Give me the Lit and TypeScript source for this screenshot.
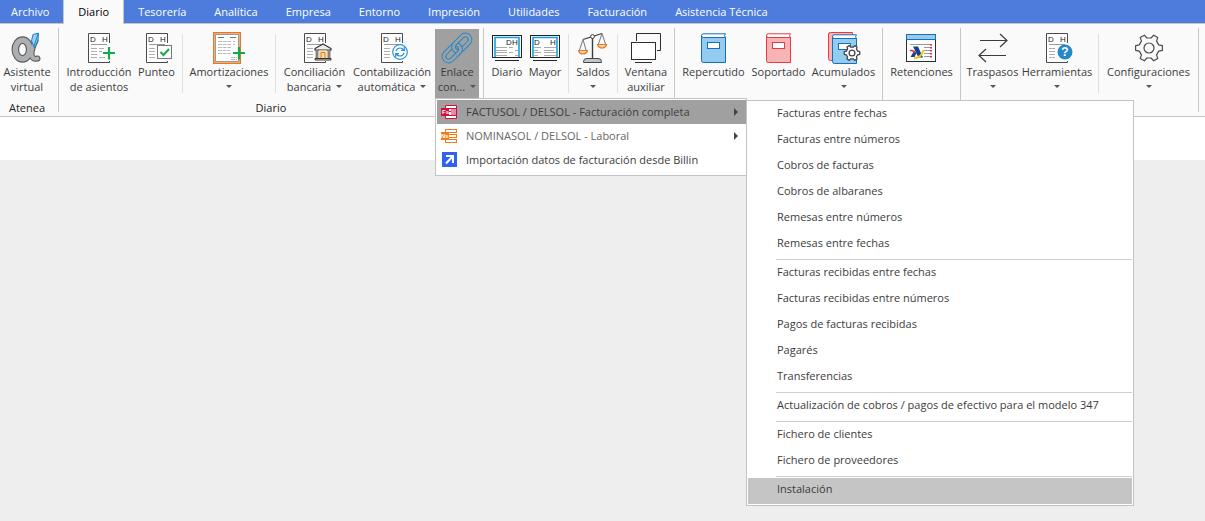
import { LitElement, html, css, svg, nothing, TemplateResult } from "lit";
import { customElement, property } from "lit/decorators.js";
import { classMap } from "lit/directives/class-map.js";
import { styleMap } from "lit/directives/style-map.js";

/* ---------- Icons, drawn on a 32 x 32 grid ---------- */

const PAGE = svg`
  <rect x="5" y="1" width="22" height="30" fill="#fff"/>
  <path d="M26.500 11V1.500H5.500V30.500H26.500V29" fill="none" stroke="#4a4a4a"/>
  <text x="7" y="10" class="glyph">D</text>
  <text x="19" y="10" class="glyph">H</text>
  <path d="M8 12.500H24" stroke="#9a9a9a"/>
  <path d="M8 16.500H14M8 19.500H14M8 22.500H14M8 25.500H14" stroke="#b0b0b0"/>`;

/* Six-toothed cog centred on the origin. */
const point = (radius: number, degrees: number) => {
  const a = (degrees * Math.PI) / 180;
  return `${(radius * Math.cos(a)).toFixed(2)} ${(radius * Math.sin(a)).toFixed(2)}`;
};
const COG = [0, 60, 120, 180, 240, 300]
  .map((d) => `${point(10.2, d - 18)}L${point(13.6, d - 10)}L${point(13.6, d + 10)}L${point(10.2, d + 18)}`)
  .join("L");
const GEAR = svg`<path d="M${COG}Z" stroke-linejoin="round"/><circle r="5"/>`;

const book = (line: string, fill: string) => svg`
  <path d="M.5 3V27.500Q.5 29.500 2.500 29.500H24.500V4.500H3Q.5 4.500 .5 2.500Z" fill="${fill}" stroke="${line}"/>
  <path d="M24.500 .8H2.500Q.5 .8 .5 2.600Q.5 4.500 2.500 4.500H24.500Q22.500 2.600 24.500 .8Z" fill="#fff" stroke="${line}"/>
  <rect x="6.500" y="9.500" width="12" height="6" fill="#fff" stroke="${line}"/>`;

const screen = (ledger: boolean) => svg`
  <rect x="1.500" y="3.500" width="29" height="22" fill="#fff" stroke="#222"/>
  <path d="M4 25V5.500H28V25" fill="none" stroke="#16a1dd" stroke-width="1.600"/>
  <path d="M4 28.500H28" stroke="#222"/>
  <text x="${ledger ? 5 : 15}" y="13" class="glyph">D</text>
  <text x="21" y="13" class="glyph">H</text>
  ${ledger
    ? svg`<path d="M5 15.500H12M5 18.500H9M5 20.500H12M5 23.500H9M15 15.500H27M15 18.500H25M15 20.500H27M15 23.500H27" stroke="#aaa"/>`
    : svg`<path d="M5 15.500H16M5 18.500H16M5 20.500H16M5 23.500H16M18 15.500H22M18 20.500H22M24 18.500H27M24 23.500H27" stroke="#aaa"/>`}`;

const CHAIN_A = svg`<rect x="-16.500" y="-4.600" width="19.500" height="9.200" rx="4.600"/>`;
const CHAIN_B = svg`<rect x="-3" y="-4.600" width="19.500" height="9.200" rx="4.600"/>`;
const CHAIN_OVER = svg`<path d="M-5 4.600H-1.600A4.600 4.600 0 0 0 2.800 1"/>`;
const tube = (shape: TemplateResult) => svg`
  <g stroke="#2386cb" stroke-width="4.800">${shape}</g>
  <g stroke="#a0a0a0" stroke-width="2.800">${shape}</g>`;

const ICONS: Record<string, TemplateResult> = {
  alpha: svg`
    <g fill="none" stroke-linecap="round">
      <path d="M24.500 9Q20.500 17 20.500 22Q21 28 26.500 26.500" stroke="#595b5d" stroke-width="6"/>
      <ellipse cx="11.500" cy="17.500" rx="7.200" ry="9.400" stroke="#595b5d" stroke-width="7.600"/>
      <ellipse cx="11.500" cy="17.500" rx="7.200" ry="9.400" stroke="#adafb1" stroke-width="5.400"/>
      <path d="M24.500 9Q20.500 17 20.500 22Q21 28 26.500 26.500" stroke="#adafb1" stroke-width="3.800"/>
    </g>
    <path d="M20.500 9L22 2.500L27.500 1.200L27 8L23.500 16Z" fill="#9fd0f2" stroke="#1583cb"/>
    <path d="M27 2L23 14" stroke="#1583cb"/>`,
  entry: svg`${PAGE}
    <path d="M16 16.500H21M16 19.500H19M16 25.500H22" stroke="#b0b0b0"/>
    <path d="M26 15V27.500M20 21H32" stroke="#17a84b" stroke-width="2.200"/>`,
  check: svg`${PAGE}
    <rect x="16.500" y="13.500" width="14" height="13" fill="#fff" stroke="#777"/>
    <path d="M19.500 20L22.500 23L28 17" fill="none" stroke="#17a84b" stroke-width="2"/>`,
  amort: svg`
    <rect x=".7" y=".7" width="26.600" height="30.600" fill="#ffd79a" stroke="#e5772d" stroke-width="1.400"/>
    <rect x="2.500" y="2.500" width="23" height="27" fill="#fff" stroke="#999"/>
    <path d="M5 5.500H11M17 5.500H23" stroke="#777"/>
    <path d="M5 9.500H18M20 9.500H22M5 12.500H18M20 12.500H22M5 15.500H18M5 18.500H17M5 21.500H18M18 25.500H24M18 27.500H24" stroke="#bbb" stroke-dasharray="4 .7"/>
    <path d="M26 15V27.500M20 21H32" stroke="#17a84b" stroke-width="2.200"/>`,
  bank: svg`${PAGE}
    <path d="M16 16.500L24 12L32 16.500V18H16Z" fill="#eee" stroke="#333" stroke-width="1.200"/>
    <path d="M18 18V26M30 18V26" stroke="#333" stroke-width="2.600"/>
    <path d="M18 18V26M30 18V26" stroke="#fff" stroke-width=".8"/>
    <rect x="20" y="18.500" width="8" height="8" fill="#ffdca0"/>
    <path d="M22 26V20.500H26V26" fill="#ffdca0" stroke="#e5772d"/>
    <path d="M16 26.500H32V28H16Z" fill="#ddd" stroke="#333"/>`,
  sync: svg`${PAGE}
    <circle cx="24" cy="20" r="7.300" fill="#fff" stroke="#2c93d2" stroke-width="1.200"/>
    <path d="M20 19Q21 16 24 16Q26 16 28 18M28.300 15V18.300H25M28 21Q27 24 24 24Q22 24 20 22M19.700 25V21.700H23" fill="none" stroke="#2c93d2" stroke-width="1.200"/>`,
  link: svg`
    <g transform="translate(16 16) rotate(-45)" fill="none">
      ${tube(CHAIN_A)}${tube(CHAIN_B)}${tube(CHAIN_OVER)}
    </g>`,
  journal: screen(false),
  ledger: screen(true),
  scales: svg`
    <g fill="none" stroke="#3c3c3c">
      <path d="M15.500 6V26" stroke-width="1.400"/>
      <path d="M6 7.500L25 1.500" stroke-width="1.300"/>
      <path d="M6 7.500L2.500 18M6 7.500L9 18M25 1.500L21.500 12M25 1.500L28.500 12" stroke="#777"/>
      <circle cx="15.500" cy="4.500" r="1.900" fill="#fff"/>
    </g>
    <path d="M1.500 18.500H10.500Q9.500 22 6 22Q2.500 22 1.500 18.500Z" fill="#ffdc9a" stroke="#e8762c" stroke-width="1.200"/>
    <path d="M20.500 12.500H29.500Q28.500 16 25 16Q21.500 16 20.500 12.500Z" fill="#ffdc9a" stroke="#e8762c" stroke-width="1.200"/>
    <path d="M6.500 30.500V29.500Q6.500 26.500 10 26.500H21Q24.500 26.500 24.500 29.500V30.500Z" fill="#c2c6c8" stroke="#444"/>`,
  windows: svg`
    <path d="M6.500 9V1.500H30.500V18.500H27" fill="none" stroke="#2d2d2d"/>
    <rect x="1.500" y="10.500" width="24" height="17" fill="#fff" stroke="#2d2d2d"/>
    <path d="M5 30.500H22" stroke="#2d2d2d"/>`,
  blueBook: svg`<g transform="translate(3 1)">${book("#176fb5", "#93cbf1")}</g>`,
  redBook: svg`<g transform="translate(3 1)">${book("#e63946", "#f5b5b7")}</g>`,
  books: svg`
    <path d="M4 28.500H2.500Q.5 28.500 .5 26.500V2Q.5 .5 2.500 .5H24.500V3" fill="#f5b5b7" stroke="#e63946"/>
    <g transform="translate(4 2)">${book("#176fb5", "#93cbf1")}</g>
    <g transform="translate(24 21) scale(.58)" fill="#fff" stroke="#444" stroke-width="2.200">${GEAR}</g>`,
  tax: svg`
    <rect x=".5" y="2.500" width="29" height="27" fill="#fff" stroke="#2d2d2d"/>
    <rect x=".5" y="2.500" width="29" height="5" fill="#93cbf1" stroke="#176fb5"/>
    <path d="M4 12.500H24M18 15.500H24M18 18.500H24M18 21.500H24M18 24.500H24" stroke="#9a9a9a"/>
    <path d="M25 12V26" stroke="#d9304c" stroke-width="2" stroke-dasharray="1.500 1.500"/>
    <path d="M7 14.500H12L17 25.500H12.500Z" fill="#12418f"/>
    <path d="M4.500 25L7.500 20H11L8.500 25Z" fill="#12418f"/>
    <path d="M4 18.500Q8 18 9.500 21" stroke="#d9304c" stroke-width="1.600" fill="none"/>
    <path d="M8 26Q15 26.500 17.500 18" stroke="#f2c51d" stroke-width="2" fill="none"/>`,
  transfer: svg`<path d="M3 8.500H30M23 2L30 8.500L23 15M29 23.500H2M9 17L2 23.500L9 30" fill="none" stroke="#3c3c3c" stroke-width="1.200"/>`,
  help: svg`${PAGE}
    <circle cx="24" cy="20" r="7.500" fill="#2389cb"/>
    <text x="24" y="24" text-anchor="middle" font-family="Liberation Sans, sans-serif" font-weight="700" font-size="12" fill="#fff">?</text>`,
  gear: svg`<g transform="translate(16 16)" fill="none" stroke="#4a4a4a" stroke-width="1.200">${GEAR}</g>`,
  factusol: svg`
    <path d="M4.500 1.500H15.500V14.500H4.500Z" fill="#fff" stroke="#d0103f"/>
    <rect x="10" y="5" width="5" height="6" fill="#ea8aa2"/>
    <path d="M8 4.500H15M8 7.500H10M8 11.500H15" stroke="#d0103f"/>
    <rect x="0" y="4" width="8" height="8" fill="#d0103f"/>
    <text x="1" y="10" font-family="Liberation Sans, sans-serif" font-size="6" font-weight="700" fill="#fff">Fs</text>`,
  nominasol: svg`
    <rect x="4.500" y="1.500" width="11" height="3" fill="#fff" stroke="#f07d1a"/>
    <rect x="7.500" y="6.500" width="8" height="3" fill="#fff" stroke="#f07d1a"/>
    <rect x="4.500" y="11.500" width="11" height="3" fill="#fff" stroke="#f07d1a"/>
    <rect x="0" y="4" width="8" height="8" fill="#f07d1a"/>
    <text x="0" y="10" font-family="Liberation Sans, sans-serif" font-size="6" font-weight="700" fill="#fff">Ns</text>`,
  billin: svg`
    <rect x="1" y="0" width="15" height="15" fill="#2f62f0"/>
    <path d="M5 4H12V11M12 4L5 11.500" fill="none" stroke="#fff" stroke-width="2"/>`,
};

/* ---------- Data ---------- */

interface Tool {
  icon: string;
  lines: string[];
  width: number;
  drop?: boolean;
  menu?: boolean;
}

interface Group {
  title?: string;
  blocks: Tool[][];
}

const TABS = ["Archivo", "Diario", "Tesorería", "Analítica", "Empresa", "Entorno", "Impresión", "Utilidades", "Facturación", "Asistencia Técnica"];

const GROUPS: Group[] = [
  { title: "Atenea", blocks: [[{ icon: "alpha", lines: ["Asistente", "virtual"], width: 54 }]] },
  {
    title: "Diario",
    blocks: [
      [
        { icon: "entry", lines: ["Introducción", "de asientos"], width: 72 },
        { icon: "check", lines: ["Punteo"], width: 43 },
      ],
      [{ icon: "amort", lines: ["Amortizaciones", ""], width: 84, drop: true }],
      [
        { icon: "bank", lines: ["Conciliación", "bancaria"], width: 69, drop: true },
        { icon: "sync", lines: ["Contabilización", "automática"], width: 86, drop: true },
        { icon: "link", lines: ["Enlace", "con..."], width: 44, drop: true, menu: true },
      ],
    ],
  },
  {
    blocks: [
      [
        { icon: "journal", lines: ["Diario"], width: 38 },
        { icon: "ledger", lines: ["Mayor"], width: 38 },
      ],
      [{ icon: "scales", lines: ["Saldos", ""], width: 40, drop: true }],
      [{ icon: "windows", lines: ["Ventana", "auxiliar"], width: 48 }],
    ],
  },
  {
    blocks: [
      [
        { icon: "blueBook", lines: ["Repercutido"], width: 69 },
        { icon: "redBook", lines: ["Soportado"], width: 61 },
        { icon: "books", lines: ["Acumulados", ""], width: 69, drop: true },
      ],
    ],
  },
  { blocks: [[{ icon: "tax", lines: ["Retenciones"], width: 69 }]] },
  {
    blocks: [
      [
        { icon: "transfer", lines: ["Traspasos", ""], width: 55, drop: true },
        { icon: "help", lines: ["Herramientas", ""], width: 74, drop: true },
      ],
      [{ icon: "gear", lines: ["Configuraciones", ""], width: 91, drop: true }],
    ],
  },
];

const SUBMENU = [
  ["Facturas entre fechas", "Facturas entre números", "Cobros de facturas", "Cobros de albaranes", "Remesas entre números", "Remesas entre fechas"],
  ["Facturas recibidas entre fechas", "Facturas recibidas entre números", "Pagos de facturas recibidas", "Pagarés", "Transferencias"],
  ["Actualización de cobros / pagos de efectivo para el modelo 347"],
  ["Fichero de clientes", "Fichero de proveedores"],
  ["Instalación"],
];

const reset = css`
  button {
    margin: 0;
    padding: 0;
    border: 0;
    background: none;
    color: inherit;
    font: inherit;
    cursor: pointer;
  }
`;

/* ---------- Drop-down of the "Enlace con..." tool ---------- */

@customElement("link-menu")
export class LinkMenu extends LitElement {
  static styles = [
    reset,
    css`
      :host {
        display: block;
      }
      .menu {
        box-sizing: border-box;
        width: 312px;
        padding: 1px 0 3px 1px;
        border: 1px solid #c3c3c3;
        background: #fff;
      }
      .entry {
        position: relative;
      }
      .item {
        display: flex;
        align-items: center;
        gap: 8px;
        width: 100%;
        height: 24px;
        padding: 0 8px 0 4px;
        text-align: left;
        white-space: nowrap;
      }
      .item.open {
        background: #a0a0a0;
      }
      .item.soft {
        color: #666;
      }
      .icon {
        width: 17px;
        height: 16px;
      }
      .text {
        flex: 1;
      }
      .arrow {
        border: 4px solid transparent;
        border-left-color: #444;
        border-right: 0;
      }
      .submenu {
        position: absolute;
        top: 0;
        left: 100%;
        box-sizing: border-box;
        width: 388px;
        padding: 1px;
        border: 1px solid #c3c3c3;
        background: #fff;
      }
      .sub {
        display: block;
        width: 100%;
        height: 26px;
        padding: 0 8px 4px 29px;
        text-align: left;
        white-space: nowrap;
      }
      .sub.current {
        background: #c5c5c5;
      }
      .rule {
        height: 1px;
        margin: 1px 0 1px 28px;
        border: 0;
        background: #cfcfcf;
      }
    `,
  ];

  private item(icon: string, text: string, cls: string, arrow = true) {
    return html`<button class="item ${cls}" role="menuitem">
      <svg class="icon" viewBox="0 0 17 16" aria-hidden="true">${ICONS[icon]}</svg>
      <span class="text">${text}</span>
      ${arrow ? html`<span class="arrow"></span>` : nothing}
    </button>`;
  }

  render() {
    return html`<div class="menu" role="menu">
      <div class="entry">
        ${this.item("factusol", "FACTUSOL / DELSOL - Facturación completa", "open")}
        <div class="submenu" role="menu">
          ${SUBMENU.map(
            (section, i) => html`${i ? html`<hr class="rule" />` : nothing}
            ${section.map(
              (text) => html`<button role="menuitem" class=${classMap({ sub: true, current: text === "Instalación" })}>${text}</button>`
            )}`
          )}
        </div>
      </div>
      ${this.item("nominasol", "NOMINASOL / DELSOL - Laboral", "soft")}
      ${this.item("billin", "Importación datos de facturación desde Billin", "", false)}
    </div>`;
  }
}

/* ---------- One large ribbon button ---------- */

@customElement("ribbon-tool")
export class RibbonTool extends LitElement {
  @property({ attribute: false }) tool!: Tool;

  static styles = [
    reset,
    css`
      :host {
        display: block;
        position: relative;
      }
      .tool {
        display: flex;
        flex-direction: column;
        align-items: center;
        box-sizing: border-box;
        height: 69px;
        padding: 3px 0 0;
        line-height: 15px;
        white-space: nowrap;
      }
      .tool.open {
        background: #a0a0a0;
      }
      .icon {
        width: 32px;
        height: 32px;
        flex: none;
        overflow: visible;
      }
      .glyph {
        font: 400 8px "Liberation Sans", sans-serif;
        fill: #222;
      }
      .line {
        display: flex;
        align-items: center;
        gap: 5px;
        min-height: 15px;
      }
      .caret {
        border: 3px solid transparent;
        border-top-color: #555;
        border-bottom: 0;
      }
      .menu {
        position: absolute;
        z-index: 2;
        top: 100%;
        left: 0;
      }
    `,
  ];

  render() {
    const { icon, lines, width, drop, menu } = this.tool;
    return html`<button
        class=${classMap({ tool: true, open: !!menu })}
        style=${styleMap({ width: `${width}px` })}
        aria-expanded=${menu ? "true" : nothing}
      >
        <svg class="icon" viewBox="0 0 32 32" aria-hidden="true">${ICONS[icon]}</svg>
        ${lines.map((text, i) => html`<span class="line">${text || nothing}${drop && i === 1 ? html`<span class="caret"></span>` : nothing}</span>`)}
      </button>
      ${menu ? html`<link-menu class="menu"></link-menu>` : nothing}`;
  }
}

/* ---------- Application shell ---------- */

@customElement("app-root")
export class AppRoot extends LitElement {
  static styles = [
    reset,
    css`
      :host {
        display: flex;
        flex-direction: column;
        min-height: 100vh;
        overflow: hidden;
        background: #eeeeee;
        color: #3c3c3c;
        font: 11px/16px "Open Sans", "Noto Sans", sans-serif;
      }
      .tabs {
        display: flex;
        background: #4d7cdc;
        color: #fff;
        border-bottom: 1px solid #c6c6c6;
      }
      .tab {
        height: 23px;
        padding: 0 14px;
        white-space: nowrap;
      }
      .tab:first-child {
        padding-left: 11px;
      }
      .tab.active {
        margin-bottom: -1px;
        height: 24px;
        padding-bottom: 1px;
        border: solid #c6c6c6;
        border-width: 0 1px;
        background: #fafafa;
        color: #000;
      }
      .ribbon {
        display: flex;
        padding: 4px 0;
        border-bottom: 1px solid #c6c6c6;
        background: #fafafa;
      }
      .group {
        display: flex;
        flex-direction: column;
        height: 84px;
        padding: 1px 4px 0;
        box-sizing: border-box;
        border-right: 1px solid #c6c6c6;
      }
      .group:first-child {
        padding-left: 0;
      }
      .blocks,
      .block {
        display: flex;
      }
      .block + .block::before {
        content: "";
        width: 1px;
        height: 59px;
        margin: 5px 4px 0;
        background: #e0e0e0;
      }
      .title {
        padding-top: 2px;
        line-height: 15px;
        text-align: center;
        color: #222;
      }
      .strip {
        height: 43px;
        background: #fff;
      }
    `,
  ];

  render() {
    return html`
      <nav class="tabs" role="tablist">
        ${TABS.map(
          (t) => html`<button role="tab" aria-selected=${t === "Diario"} class=${classMap({ tab: true, active: t === "Diario" })}>${t}</button>`
        )}
      </nav>
      <div class="ribbon" role="toolbar">
        ${GROUPS.map(
          (g) => html`<section class="group">
            <div class="blocks">
              ${g.blocks.map((b) => html`<div class="block">${b.map((t) => html`<ribbon-tool .tool=${t}></ribbon-tool>`)}</div>`)}
            </div>
            ${g.title ? html`<div class="title">${g.title}</div>` : nothing}
          </section>`
        )}
      </div>
      <div class="strip"></div>
    `;
  }
}
